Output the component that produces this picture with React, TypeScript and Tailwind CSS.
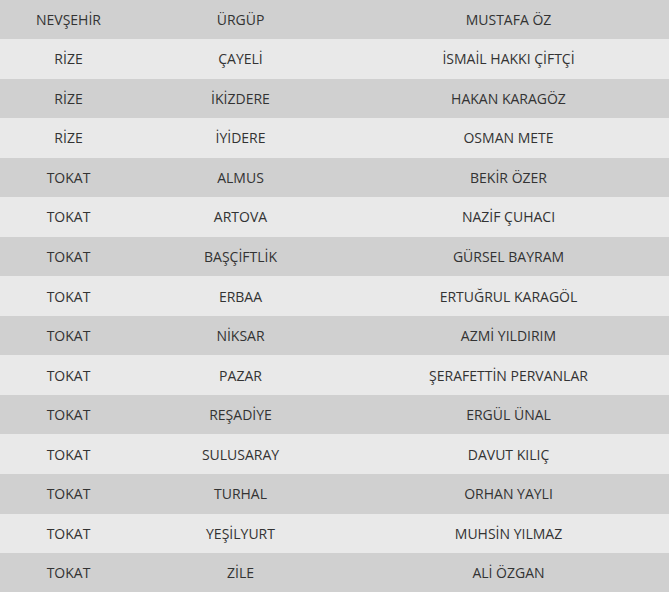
import React from "react";

const rows: [string, string, string][] = [
  ["NEVŞEHİR", "ÜRGÜP", "MUSTAFA ÖZ"],
  ["RİZE", "ÇAYELİ", "İSMAİL HAKKI ÇİFTÇİ"],
  ["RİZE", "İKİZDERE", "HAKAN KARAGÖZ"],
  ["RİZE", "İYİDERE", "OSMAN METE"],
  ["TOKAT", "ALMUS", "BEKİR ÖZER"],
  ["TOKAT", "ARTOVA", "NAZİF ÇUHACI"],
  ["TOKAT", "BAŞÇİFTLİK", "GÜRSEL BAYRAM"],
  ["TOKAT", "ERBAA", "ERTUĞRUL KARAGÖL"],
  ["TOKAT", "NİKSAR", "AZMİ YILDIRIM"],
  ["TOKAT", "PAZAR", "ŞERAFETTİN PERVANLAR"],
  ["TOKAT", "REŞADİYE", "ERGÜL ÜNAL"],
  ["TOKAT", "SULUSARAY", "DAVUT KILIÇ"],
  ["TOKAT", "TURHAL", "ORHAN YAYLI"],
  ["TOKAT", "YEŞİLYURT", "MUHSİN YILMAZ"],
  ["TOKAT", "ZİLE", "ALİ ÖZGAN"],
];

export default function App() {
  return (
    <div className="w-[669px] h-[592px] overflow-hidden bg-white">
      <div
        className="w-[673px] -mt-[0.6px] text-[14px] text-[#333333]"
        style={{ fontFamily: '"Open Sans", "Noto Sans", sans-serif' }}
      >
        {rows.map((r, i) => (
          <div
            key={i}
            className={`grid grid-cols-[137px_207px_1fr] h-[39.55px] items-center text-center ${
              i % 2 === 0 ? "bg-[#d0d0d0]" : "bg-[#e9e9e9]"
            }`}
          >
            <div>{r[0]}</div>
            <div>{r[1]}</div>
            <div>{r[2]}</div>
          </div>
        ))}
      </div>
    </div>
  );
}
